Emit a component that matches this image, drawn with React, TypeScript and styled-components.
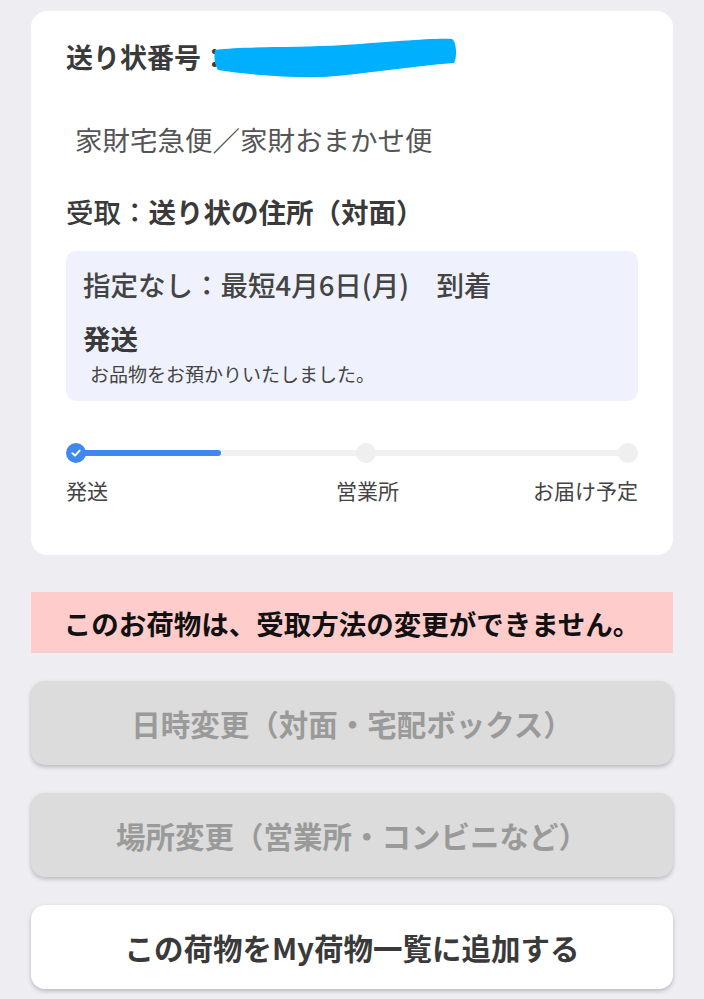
import * as React from 'react';
import styled, { createGlobalStyle } from 'styled-components';

const GlobalStyle = createGlobalStyle`
    html, body {
        margin: 0;
        padding: 0;
        background: #ededf2;
    }
    body {
        font-family: "Noto Sans CJK JP", "Noto Sans", sans-serif;
        color: #3a3a3a;
    }
`;

const Page = styled.div`
    display: flex;
    flex-direction: column;
    padding: 11px 31px 10px 31px;
`;

const Card = styled.section`
    background: #ffffff;
    border-radius: 16px;
    padding: 28px 35px 51px 35px;
    display: flex;
    flex-direction: column;
`;

const TitleRow = styled.div`
    position: relative;
    font-size: 27px;
    line-height: 36px;
    font-weight: 700;
    color: #3a3a3a;
`;

const Redaction = styled.svg`
    position: absolute;
    left: 148px;
    top: -3px;
    width: 242px;
    height: 42px;
`;

const Service = styled.div`
    margin-top: 46px;
    padding-left: 9px;
    font-size: 27.5px;
    line-height: 36px;
    font-weight: 400;
    color: #555555;
`;

const Receive = styled.div`
    margin-top: 36px;
    font-size: 27.5px;
    line-height: 36px;
    font-weight: 700;
    color: #3a3a3a;
`;

const ReceiveLabel = styled.span`
    font-weight: 500;
`;

const InfoBox = styled.div`
    margin-top: 22px;
    background: #eff2fc;
    border-radius: 10px;
    padding: 15px 17px 15px 17px;
    display: flex;
    flex-direction: column;
`;

const Arrival = styled.div`
    font-size: 27.5px;
    line-height: 36px;
    font-weight: 500;
    color: #444444;
`;

const Status = styled.div`
    margin-top: 18px;
    font-size: 27.5px;
    line-height: 36px;
    font-weight: 700;
    color: #3a3a3a;
`;

const StatusNote = styled.div`
    margin-top: 6px;
    padding-left: 7px;
    font-size: 19px;
    line-height: 24px;
    color: #444444;
`;

const Track = styled.div`
    position: relative;
    margin-top: 42px;
    height: 20px;
    display: grid;
    grid-template-columns: 20px 270fr 20px 242fr 20px;
    align-items: center;

    &::before {
        content: '';
        position: absolute;
        left: 10px;
        right: 10px;
        top: 7px;
        height: 6px;
        background: #f1f1f1;
        border-radius: 3px;
    }
`;

const Fill = styled.div`
    position: absolute;
    left: 10px;
    top: 7px;
    height: 6px;
    background: #3f88f0;
    border-radius: 3px;
`;

const Dot = styled.div<{ $done?: boolean }>`
    position: relative;
    width: 20px;
    height: 20px;
    border-radius: 50%;
    background: ${(p) => (p.$done ? '#3f88f0' : '#efefef')};
    display: flex;
    align-items: center;
    justify-content: center;
`;

const LabelRow = styled.div`
    margin-top: 13px;
    display: grid;
    grid-template-columns: 271fr auto 240fr;
    font-size: 21px;
    line-height: 28px;
    color: #444444;
`;

const StepLabel = styled.div<{ $align: 'left' | 'center' | 'right' }>`
    text-align: ${(p) => p.$align};
`;

const Notice = styled.div`
    margin-top: 37px;
    height: 61px;
    background: #ffcccc;
    display: flex;
    align-items: center;
    justify-content: center;
    font-size: 27.5px;
    font-weight: 700;
    color: #111111;
`;

const ActionButton = styled.button<{ $disabled?: boolean }>`
    margin-top: 28px;
    height: 84px;
    border: 0;
    border-radius: 14px;
    font-family: "Noto Sans CJK JP", "Noto Sans", sans-serif;
    font-size: 29.5px;
    font-weight: 700;
    background: ${(p) => (p.$disabled ? '#dcdcdc' : '#ffffff')};
    color: ${(p) => (p.$disabled ? '#9a9a9a' : '#3a3a3a')};
    box-shadow: 0 2px 4px rgba(0, 0, 0, 0.22);
    cursor: ${(p) => (p.$disabled ? 'default' : 'pointer')};
`;

const steps = [
    { label: '発送', align: 'left' as const },
    { label: '営業所', align: 'center' as const },
    { label: 'お届け予定', align: 'right' as const },
];

const CheckIcon = () => (
    <svg width="12" height="12" viewBox="0 0 12 12">
        <path d="M2.4 6.2 L5 8.6 L9.6 3.6" fill="none" stroke="#ffffff" strokeWidth="2" strokeLinecap="round" strokeLinejoin="round" />
    </svg>
);

export default function App() {
    // width of the blue bar, from the first dot's centre
    const progressPx = 145;

    return (
        <>
            <GlobalStyle />
            <Page>
                <Card>
                    <TitleRow>
                        送り状番号：
                        <Redaction viewBox="0 0 242 42">
                            <path
                                d="M1,14 C30,10 80,12 130,9 C180,6 215,2 238,3 C243,6 243,22 240,27 C200,30 150,38 110,41 C70,42 30,38 4,34 C0,28 0,20 1,14 Z"
                                fill="#00b0ff"
                            />
                        </Redaction>
                    </TitleRow>
                    <Service>家財宅急便／家財おまかせ便</Service>
                    <Receive>
                        <ReceiveLabel>受取：</ReceiveLabel>送り状の住所（対面）
                    </Receive>
                    <InfoBox>
                        <Arrival>指定なし：最短4月6日(月)　到着</Arrival>
                        <Status>発送</Status>
                        <StatusNote>お品物をお預かりいたしました。</StatusNote>
                    </InfoBox>
                    <Track>
                        <Fill style={{ width: progressPx }} />
                        <Dot $done>
                            <CheckIcon />
                        </Dot>
                        <span />
                        <Dot />
                        <span />
                        <Dot />
                    </Track>
                    <LabelRow>
                        {steps.map((s) => (
                            <StepLabel key={s.label} $align={s.align}>
                                {s.label}
                            </StepLabel>
                        ))}
                    </LabelRow>
                </Card>
                <Notice>このお荷物は、受取方法の変更ができません。</Notice>
                <ActionButton type="button" $disabled>
                    日時変更（対面・宅配ボックス）
                </ActionButton>
                <ActionButton type="button" $disabled>
                    場所変更（営業所・コンビニなど）
                </ActionButton>
                <ActionButton type="button">この荷物をMy荷物一覧に追加する</ActionButton>
            </Page>
        </>
    );
}
